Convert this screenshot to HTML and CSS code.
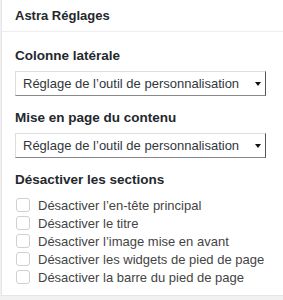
FILE: index.html
```html
<!DOCTYPE html>
<html lang="fr">
<head>
  <meta charset="UTF-8" />
  <title>Astra Réglages</title>
  <link rel="stylesheet" href="styles.css">
</head>
<body>
  <div class="panel">
    <h3 class="panel-title">Astra Réglages</h3>
    <div class="panel-body">
      <div class="field">
        <div class="label">Colonne latérale</div>
        <div class="select"><span>Réglage de l’outil de personnalisation</span><span class="arrow"></span></div>
      </div>
      <div class="field">
        <div class="label">Mise en page du contenu</div>
        <div class="select"><span>Réglage de l’outil de personnalisation</span><span class="arrow"></span></div>
      </div>
      <div class="field">
        <div class="label">Désactiver les sections</div>
        <ul class="checks">
          <li><span class="box"></span>Désactiver l’en-tête principal</li>
          <li><span class="box"></span>Désactiver le titre</li>
          <li><span class="box"></span>Désactiver l’image mise en avant</li>
          <li><span class="box"></span>Désactiver les widgets de pied de page</li>
          <li><span class="box"></span>Désactiver la barre du pied de page</li>
        </ul>
      </div>
    </div>
  </div>
</body>
</html>
```

FILE: styles.css
```css
body {
    margin: 0;
    background: #f1f1f1;
    font-family: "Liberation Sans", Arial, sans-serif;
    color: #23282d;
}
.panel {
    background: #fff;
    border-left: 1px solid #e5e5e5;
    margin-left: 1px;
    height: 296px;
    box-sizing: border-box;
    border-bottom: 1px solid #e5e5e5;
}
.panel-title {
    margin: 0;
    font-size: 13px;
    font-weight: bold;
    padding: 8px 13px 0;
    height: 23px;
    border-bottom: 1px solid #eee;
}
.panel-body {
    padding: 16px 0 0 13px;
}
.field {
    margin-bottom: 14px;
}
.label {
    font-size: 13.5px;
    font-weight: bold;
    height: 16px;
    line-height: 16px;
    margin-bottom: 7px;
}
.select {
    display: flex;
    align-items: center;
    justify-content: space-between;
    width: 251px;
    height: 25px;
    box-sizing: border-box;
    border: 1px solid #ddd;
    border-right: 1px solid #555;
    border-bottom: 1px solid #888;
    padding-left: 7px;
    font-size: 13px;
    color: #32373c;
}
.arrow {
    width: 0;
    height: 0;
    border-left: 3px solid transparent;
    border-right: 3px solid transparent;
    border-top: 4px solid #111;
    margin-right: 4px;
}
.checks {
    list-style: none;
    margin: 8px 0 0;
    padding: 0;
}
.checks li {
    display: flex;
    align-items: center;
    height: 18px;
    font-size: 13px;
    color: #444;
}
.box {
    width: 12px;
    height: 12px;
    border: 1px solid #d0d0d0;
    border-radius: 3px;
    margin: 0 8px 0 1px;
}
```
